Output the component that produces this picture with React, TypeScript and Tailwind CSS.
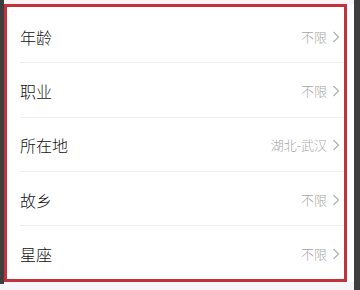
import React from 'react';

const rows = [
  { label: '年龄', value: '不限' },
  { label: '职业', value: '不限' },
  { label: '所在地', value: '湖北-武汉' },
  { label: '故乡', value: '不限' },
  { label: '星座', value: '不限' },
];

function Chevron() {
  return (
    <svg width="8" height="12" viewBox="0 0 8 12" className="ml-[5px] shrink-0">
      <path d="M1.5 1 L6.5 6 L1.5 11" fill="none" stroke="#b0b0b0" strokeWidth="1.2" />
    </svg>
  );
}

export default function App() {
  return (
    <div
      className="flex h-[290px] w-[360px] overflow-hidden bg-[#f6f6f8]"
      style={{ fontFamily: '"Noto Sans CJK SC", "Noto Sans", sans-serif' }}
    >
      <div className="h-[284px] w-[4px] shrink-0 bg-[#3e3e3e]" />
      <div className="flex flex-1 flex-col">
        <div className="h-[4px] bg-[#fbf3f4]" />
        <div className="flex">
          <div className="h-[278px] w-[343px] overflow-hidden border-[3px] border-[#c2323c] bg-white">
            <div className="pt-[2px]">
              {rows.map((r) => (
                <div key={r.label} className="ml-[13px] flex h-[54.3px] items-center border-b border-[#efefef] pr-[4px]">
                  <span className="flex-1 pt-[2px] text-[16px] font-light text-[#111]">{r.label}</span>
                  <span className="pt-[2px] text-[13px] font-light text-[#a6a6a6]">{r.value}</span>
                  <span className="pt-[2px]"><Chevron /></span>
                </div>
              ))}
            </div>
          </div>
          <div className="h-[278px] flex-1 bg-white" />
        </div>
      </div>
      <div className="w-[6px] shrink-0 bg-[#3e3e3e]" />
    </div>
  );
}
